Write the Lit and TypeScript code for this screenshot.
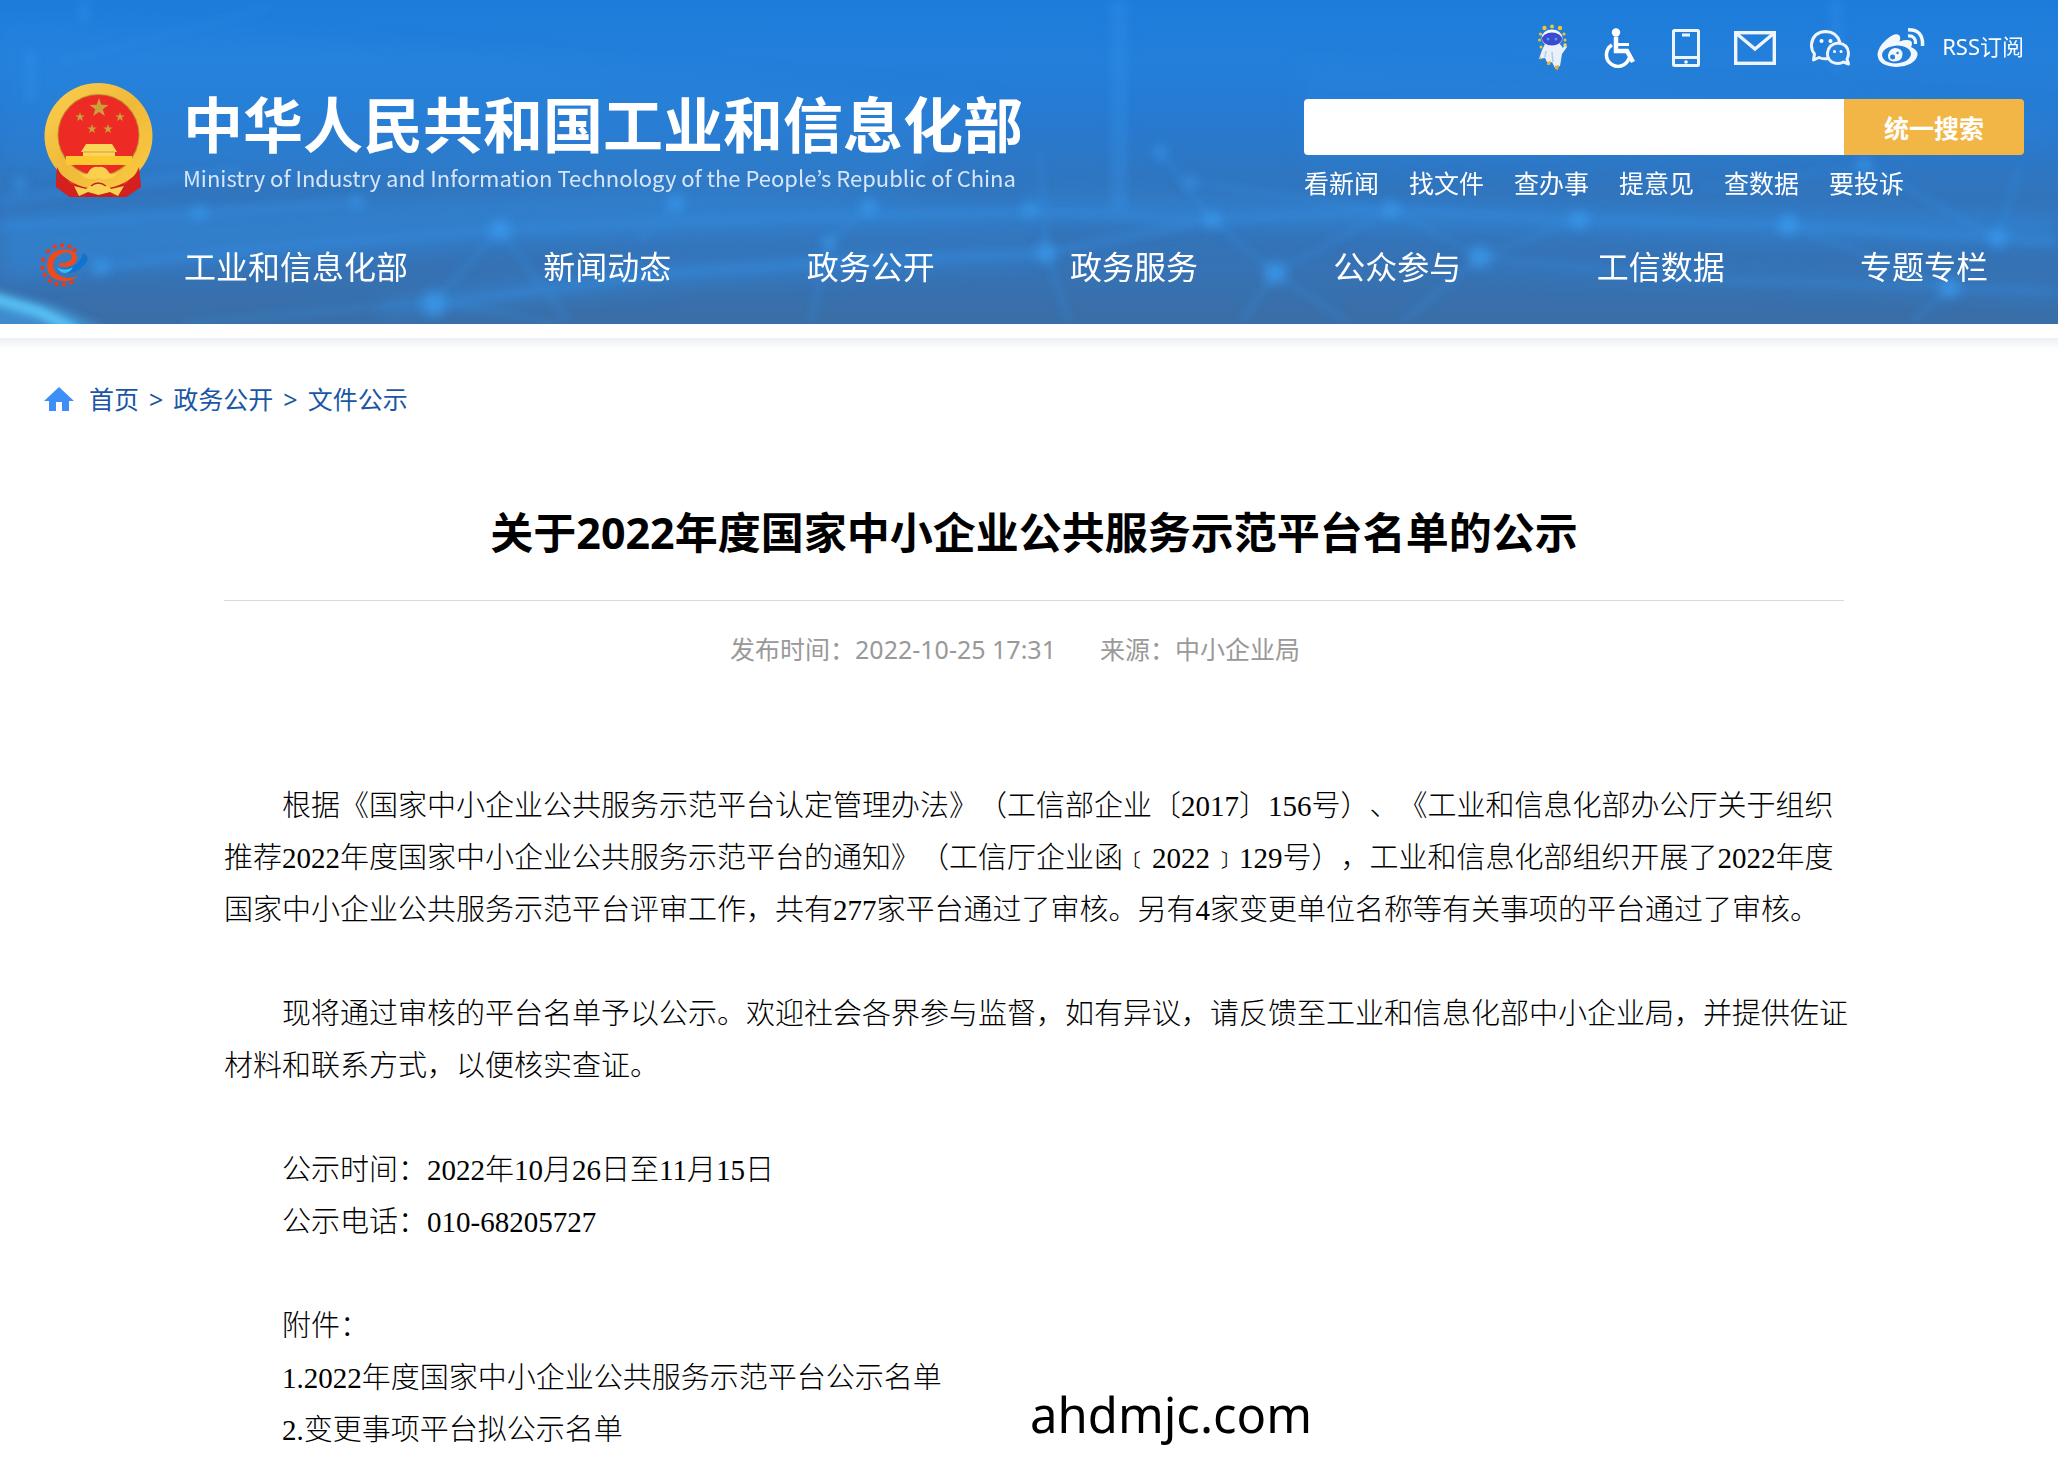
import { LitElement, html, css, svg } from "lit";
import { customElement } from "lit/decorators.js";

const star = (cx: number, cy: number, r: number) => {
  const pts: string[] = [];
  for (let i = 0; i < 10; i++) {
    const a = -Math.PI / 2 + (i * Math.PI) / 5;
    const k = i % 2 ? r * 0.4 : r;
    pts.push(`${(cx + k * Math.cos(a)).toFixed(2)},${(cy + k * Math.sin(a)).toFixed(2)}`);
  }
  return svg`<polygon points=${pts.join(" ")} fill="#c9a03a"/>`;
};

const emblem = html`
  <svg class="emblem" viewBox="0 0 109 116" role="img" aria-label="国徽">
    <defs>
      <linearGradient id="gold" x1="0" y1="0" x2="1" y2="1">
        <stop offset="0" stop-color="#fbd04f" /><stop offset=".5" stop-color="#f0b93a" /><stop offset="1" stop-color="#fccb42" />
      </linearGradient>
    </defs>
    <path d="M13 80 L12 104 L26 114 L82 114 L97 104 L94 80 Z" fill="#c9201c" />
    <path d="M18 88 L16 104 M25 92 L30 110 M90 88 L92 103 M84 92 L79 110" stroke="#e8342b" stroke-width="4" fill="none" />
    <ellipse cx="54.500" cy="53" rx="54" ry="53" fill="url(#gold)" />
    <path d="M13 84 Q22 104 44 106 L40 114 L26 114 L12 104 Z" fill="#d5211d" />
    <path d="M95 84 Q87 104 65 106 L69 114 L82 114 L97 104 Z" fill="#d5211d" />
    <circle cx="54.500" cy="52" r="41" fill="#b98a2c" />
    <circle cx="54.500" cy="52" r="40" fill="#ee2a24" />
    ${star(55, 25, 10)}${star(36, 34, 5)}${star(76, 34, 5)}${star(48, 46, 5)}${star(64, 46, 5)}
    <path d="M42 61 H68 L73 69 H71 V73 H39 V69 H37 Z" fill="#fbd65b" />
    <path d="M39 69 H71" stroke="#d99d2d" stroke-width="1" />
    <path d="M22 73 H88 V82 H22 Z" fill="#fcc832" />
    <path d="M36 90 Q43 94 45 88 Q49 83 54.500 84 Q60 83 64 88 Q67 94 74 90 Q66 99 54.500 95 Q43 99 36 90 Z" fill="#fbd04f" />
    <path d="M30 103 L42 106 L50 100 L54.500 97 L60 100 L67 106 L80 103 L74 113 L66 109 L54.500 112 L44 109 L35 113 Z" fill="#f9d254" />
    <path d="M47 103 Q54 97 62 103" stroke="#c9201c" stroke-width="1.500" fill="none" />
  </svg>`;

const teeth = [-45, -22, 0, 22, 40, 152, 174, 196, 218, 240, 262, 286];
const gearLogo = html`
  <svg class="gear" viewBox="0 0 50 44" aria-hidden="true">
    ${teeth.map(
      (a) => svg`<rect x="-2" y="-21.500" width="4" height="3.500" fill="#ea3a17" transform="translate(22 22) rotate(${a})"/>`
    )}
    <path d="M39 33 Q31 39 22 38 Q7 36 7 22 Q8 8 22 6.500 Q36 6 37 14 Q37 23 26 24 Q20 24 18 22 L20 20 Q31 20 32 14 Q31 8 23 10 Q13 14 13 23 Q15 34 28 35 Q34 35 39 33 Z" fill="#f04a1a" />
    <path d="M17 24 Q26 28 36 21 Q42 16 43 10 Q52 14 44 22 Q36 31 25 30 Q19 29 17 24 Z" fill="#1172cf" />
    <path d="M17 24 Q24 29 33 24 Q30 30 24 30 Q19 29 17 24 Z" fill="#39bdf0" />
  </svg>`;

const robotIcon = svg`
  <svg viewBox="0 0 30 48" width="30" height="48">
    <g fill="#f3c331">
      <circle cx="6.500" cy="4" r="2.200"/><circle cx="14" cy="2.500" r="2"/><circle cx="22" cy="4" r="2.200"/>
      <circle cx="2.500" cy="10" r="1.600"/><circle cx="26" cy="10" r="1.600"/><circle cx="1.500" cy="16" r="1.500"/><circle cx="27" cy="16" r="1.500"/><circle cx="3" cy="23" r="1.500"/>
    </g>
    <ellipse cx="14" cy="14" rx="10.500" ry="8.500" fill="#f3f6fb"/>
    <path d="M7 20 H22 L25 24 L27 20 L29 23 L24 30 L22 42 L17 44 L14 38 L10 40 L7 34 L1 35 L4 26 Z" fill="#eaf0fa"/>
    <path d="M14 28 L15 38 M8 27 L7 33" stroke="#b4c9e6" stroke-width="1.500"/>
    <ellipse cx="14" cy="15" rx="10" ry="6.500" fill="#3d49cf"/>
    <circle cx="10" cy="15" r="1.500" fill="#39a5f5"/><circle cx="18" cy="15" r="1.500" fill="#39a5f5"/>
    <path d="M9 38 L13 37 L12 41 L9 41 Z M17 42 L21 41 L20 46 L17 45 Z M1 33 L4 34 L3 36 Z" fill="#f2a932"/>
    <circle cx="27" cy="21" r="1.800" fill="#f6cf63"/>
  </svg>`;

const wheelchairIcon = svg`
  <svg viewBox="0 0 32 40" width="32" height="40" fill="none" stroke="#fff" stroke-width="3.500">
    <circle cx="12" cy="4.500" r="4.200" fill="#fff" stroke="none"/>
    <path d="M12 9 V23 H23 L29 34" stroke-width="4.500"/>
    <path d="M12 16.500 H25" stroke-width="3"/>
    <path d="M8 17 A11.500 11.500 0 1 0 25 30"/>
  </svg>`;

const phoneIcon = svg`
  <svg viewBox="0 0 28 38" width="28" height="38" fill="none" stroke="#eef5fd" stroke-width="3">
    <rect x="1.500" y="1.500" width="25" height="35" rx="1"/>
    <path d="M2 28.500 H26 M10 6 H18"/>
    <circle cx="14" cy="33" r="1.800" fill="#fff" stroke="none"/>
  </svg>`;

const mailIcon = svg`
  <svg viewBox="0 0 42 34" width="42" height="34" fill="none" stroke="#eef5fd" stroke-width="3.400">
    <rect x="1.700" y="1.700" width="38.600" height="30.600"/>
    <path d="M3 3 L21 18 L39 3"/>
  </svg>`;

const wechatIcon = svg`
  <svg viewBox="0 0 40 36" width="40" height="36" fill="none" stroke="#eef5fd" stroke-width="3" stroke-linejoin="round">
    <path d="M18 28.500 Q13 29.500 9 27.500 L3.500 30 L4.500 24 Q1 20 1.500 14 Q3 2 16 1.500 Q27 2 30 12.500"/>
    <path d="M28 13 Q38 14 38.500 23 Q38.500 26.500 37 29 L38.500 34 L33.500 32 Q28 35 22 32 Q17 29 17.500 23 Q18.500 14 28 13 Z"/>
    <g fill="#fff" stroke="none"><circle cx="11.500" cy="11" r="2"/><circle cx="20.500" cy="11" r="2"/><circle cx="24.500" cy="21.500" r="1.500"/><circle cx="31" cy="21.500" r="1.500"/></g>
  </svg>`;

const weiboIcon = svg`
  <svg viewBox="0 0 48 40" width="48" height="40">
    <path fill-rule="evenodd" fill="#f4f8fe" d="M21 6.500 Q24.500 8 22.500 13.500 Q30 11 34 13 Q36 15 34 19 Q41 22 40.500 27 Q38 38 19 39 Q1 38 .5 26.500 Q1 19 9 12 Q16 5.500 21 6.500 Z M20 17.500 Q5.500 19 5 27 Q6 35 19 35.500 Q33 34 34 26 Q33 18 20 17.500 Z"/>
    <path fill-rule="evenodd" fill="#f4f8fe" d="M18 20 Q25.500 20 25.500 26.500 Q25 33.500 17 33.500 Q10.500 33 11 27 Q12 21 18 20 Z M15.500 26.500 A2.500 2.500 0 1 0 15.600 31.500 A2.500 2.500 0 1 0 15.500 26.500 Z M20.500 23.800 A1.200 1.200 0 1 0 20.600 26.300 A1.200 1.200 0 1 0 20.500 23.800 Z"/>
    <path d="M31 8 Q39 7.500 38.500 16" fill="none" stroke="#f4f8fe" stroke-width="3.200"/>
    <path d="M31 1.800 Q46.500 1.500 45.500 18" fill="none" stroke="#f4f8fe" stroke-width="3.500"/>
  </svg>`;

const tools = [
  { label: "智能问答", icon: robotIcon },
  { label: "无障碍", icon: wheelchairIcon },
  { label: "手机版", icon: phoneIcon },
  { label: "邮箱", icon: mailIcon },
  { label: "微信", icon: wechatIcon },
  { label: "微博", icon: weiboIcon },
];

const nodes: [number, number, number][] = [
  [199, 213, 7], [358, 202, 6], [500, 230, 10], [676, 203, 8], [869, 207, 8], [100, 267, 8],
  [434, 304, 12], [829, 243, 7], [1030, 210, 7], [1046, 253, 10], [1212, 220, 8], [1391, 210, 8],
  [1579, 220, 9], [1788, 225, 10], [1998, 238, 9], [1275, 273, 11], [1480, 257, 11], [1950, 288, 10],
  [1190, 182, 6], [1864, 165, 7], [1160, 152, 6], [20, 184, 6],
];

const backdrop = html`
  <svg class="backdrop" viewBox="0 0 2058 324" preserveAspectRatio="none" aria-hidden="true">
    <defs>
      <filter id="soft" x="-5%" y="-20%" width="110%" height="140%"><feGaussianBlur stdDeviation="4" /></filter>
      <filter id="glow" x="-5%" y="-20%" width="110%" height="140%"><feGaussianBlur stdDeviation="6" /></filter>
      <filter id="softer" x="-20%" y="-50%" width="140%" height="200%"><feGaussianBlur stdDeviation="10" /></filter>
    </defs>
    <g filter="url(#softer)" fill="#3394ee" opacity=".34">
      <path d="M0 20 L240 30 L1000 100 L900 190 L0 170 Z" opacity=".5" />
      <path d="M1300 60 L2058 110 L2058 150 L1300 170 Z" opacity=".4" />
      <path d="M1020 195 L2058 215 L2058 245 L1020 222 Z" />
      <path d="M0 215 L676 190 L1040 205 L1040 228 L500 245 L0 280 Z" />
      <path d="M380 300 L673 262 L1040 246 L1040 262 L673 285 L380 318 Z" />
      <path d="M1480 262 L2058 285 L2058 300 L1480 272 Z" opacity=".7" />
    </g>
    <g filter="url(#soft)" stroke="#3795ec" fill="none" stroke-width="9" opacity=".3">
      <path d="M0 226 L199 213 L358 202 M240 250 L500 230 L676 222 L869 215 L1030 212 L1212 220 L1391 210 L1579 220 L1788 225 L1998 238 L2058 242" />
      <path d="M0 200 L240 170 M100 267 L240 250 M434 304 L673 273 L829 262 L1046 253 L1212 220" />
      <path d="M434 302 L180 324 M434 302 L560 324 M500 230 L434 302 M500 230 L570 324" stroke-width="5" />
      <path d="M1212 220 L1275 273 L1391 210 L1480 257 L1579 220 M1275 273 L1240 324 M1275 273 L1350 324 M1480 257 L1400 324" stroke-width="5" />
      <path d="M1480 257 L1700 280 L1950 288 L2058 292 M1950 288 L1910 324 M1950 288 L1788 225 M1998 238 L2020 165 M1864 165 L1998 238" stroke-width="5" />
      <path d="M1040 150 L1046 253 L1070 324 M1160 152 L1212 220 M1190 182 L1391 210 M676 203 L640 240 M869 207 L829 243 L810 324" stroke-width="5" />
      <path d="M1119 0 V210" stroke-width="18" />
      <path d="M31 50 V100 M84 0 V24 M1836 0 V70" stroke-width="12" />
      <path d="M60 62 L270 8 M1700 190 L1864 165" stroke-width="4" />
    </g>
    <g filter="url(#glow)" fill="#3a9df2" opacity=".75">
      ${nodes.map(([x, y, r]) => svg`<circle cx=${x} cy=${y} r=${r}/>`)}
    </g>
    <g filter="url(#soft)">
      <path d="M-10 290 L60 308 L110 330 L-10 330 Z" fill="#3f9fe6" opacity=".6" />
      <path d="M-10 297 L40 312 L75 330" stroke="#5cc8fa" stroke-width="10" fill="none" />
    </g>
  </svg>`;

@customElement("site-header")
class SiteHeader extends LitElement {
  static styles = css`
    :host { display: block; }
    .header {
      position: relative;
      overflow: hidden;
      display: flex;
      flex-direction: column;
      color: #fff;
      background: linear-gradient(#1d7cdb 0, #237fda 60px, #2879ce 130px, #3175bd 190px, #3672b4 270px, #3a6ea6 100%);
      padding: 24px 34px 35px 44px;
      font-family: "Noto Sans", "Noto Sans CJK SC", sans-serif;
    }
    .backdrop { position: absolute; inset: 0; width: 100%; height: 100%; }
    .top { position: relative; display: flex; justify-content: space-between; height: 175px; }
    .brand { display: flex; align-items: flex-start; gap: 30px; color: inherit; text-decoration: none; padding-top: 59px; }
    .emblem { width: 109px; height: 116px; flex: none; }
    .gear { width: 50px; height: 44px; flex: none; }
    .names { display: flex; flex-direction: column; white-space: nowrap; }
    .name { font-family: "Noto Sans CJK SC", sans-serif; font-size: 60px; line-height: 78px; font-weight: 700; }
    .english { font-family: "Noto Sans CJK KR", sans-serif; font-size: 22px; line-height: 32px; color: #d6e6f8; }
    .side { display: flex; flex-direction: column; width: 720px; flex: none; }
    .tools { display: flex; align-items: center; justify-content: flex-end; height: 48px; flex: none; }
    .tool { display: flex; color: inherit; text-decoration: none; margin-right: 36px; }
    .tool:nth-child(3), .tool:nth-child(4) { margin-right: 34px; }
    .tool:nth-child(5) { margin-right: 27px; }
    .tool:nth-child(6) { margin-right: 17px; }
    .rss { font-size: 22px; line-height: 44px; align-self: flex-start; color: inherit; text-decoration: none; }
    .search { display: flex; flex: none; height: 56px; margin: 27px 0 0; border-radius: 4px; overflow: hidden; }
    .field { flex: 1; min-width: 0; border: 0; padding: 0 16px; background: #fff; font: inherit; font-size: 25px; outline: none; }
    .submit { width: 180px; border: 0; background: #f2b646; color: #fff; font: inherit; font-size: 25px; font-weight: 700; padding: 0; }
    .quick { display: flex; flex: none; gap: 30px; font-size: 25px; line-height: 36px; margin-top: 10px; }
    .quick a, .links a { color: inherit; text-decoration: none; white-space: nowrap; }
    .nav { position: relative; display: flex; align-items: center; height: 48px; margin-top: 42px; margin-left: -4px; font-size: 32px; }
    .links { display: flex; flex: 1; justify-content: space-between; margin: 0 36px 0 94px; }
    .edge { height: 14px; background: #fff; }
    .shade { height: 12px; background: linear-gradient(#ebf0f5, #fff); }
  `;
  render() {
    return html`
      <header class="header">
        ${backdrop}
        <div class="top">
          <a class="brand" href="#">
            ${emblem}
            <span class="names">
              <span class="name">中华人民共和国工业和信息化部</span>
              <span class="english" lang="en">Ministry of Industry and Information Technology of the People’s Republic of China</span>
            </span>
          </a>
          <div class="side">
            <div class="tools">
              ${tools.map((t) => html`<a class="tool" href="#" aria-label=${t.label}>${t.icon}</a>`)}
              <a class="rss" href="#">RSS订阅</a>
            </div>
            <form class="search" @submit=${(e: Event) => e.preventDefault()}>
              <input class="field" type="text" aria-label="统一搜索" />
              <button class="submit" type="submit">统一搜索</button>
            </form>
            <div class="quick">
              ${["看新闻", "找文件", "查办事", "提意见", "查数据", "要投诉"].map((t) => html`<a href="#">${t}</a>`)}
            </div>
          </div>
        </div>
        <nav class="nav">
          ${gearLogo}
          <div class="links">
            ${["工业和信息化部", "新闻动态", "政务公开", "政务服务", "公众参与", "工信数据", "专题专栏"].map(
              (t) => html`<a href="#">${t}</a>`
            )}
          </div>
        </nav>
      </header>
      <div class="edge"></div>
      <div class="shade"></div>
    `;
  }
}

@customElement("notice-article")
class NoticeArticle extends LitElement {
  static styles = css`
    :host { display: block; }
    .article { padding: 0 180px; font-family: "Noto Sans", "Noto Sans CJK SC", sans-serif; }
    .title { margin: 0; padding-bottom: 35px; border-bottom: 1px solid #d9d9d9; font-size: 43px; line-height: 64px; font-weight: 700; text-align: center; color: #000; }
    .meta { display: flex; justify-content: center; gap: 44px; margin-top: 30px; padding-right: 38px; font-size: 25px; line-height: 36px; color: #999; }
    .body { margin: 113px -16px 0 0; font-family: "Liberation Serif", "Noto Sans CJK SC", serif; font-weight: 300; font-size: 29px; line-height: 52px; color: #000; text-spacing-trim: space-all; }
    .body p { margin: 0; text-indent: 2em; }
    .body .gap { margin-top: 52px; }
    .body a { color: inherit; text-decoration: none; }
  `;
  render() {
    return html`
      <article class="article">
        <h1 class="title">关于2022年度国家中小企业公共服务示范平台名单的公示</h1>
        <div class="meta"><span>发布时间：2022-10-25 17:31</span><span>来源：中小企业局</span></div>
        <div class="body">
          <p>根据《国家中小企业公共服务示范平台认定管理办法》（工信部企业〔2017〕156号）、《工业和信息化部办公厅关于组织推荐2022年度国家中小企业公共服务示范平台的通知》（工信厅企业函﹝2022﹞129号），工业和信息化部组织开展了2022年度国家中小企业公共服务示范平台评审工作，共有277家平台通过了审核。另有4家变更单位名称等有关事项的平台通过了审核。</p>
          <p class="gap">现将通过审核的平台名单予以公示。欢迎社会各界参与监督，如有异议，请反馈至工业和信息化部中小企业局，并提供佐证材料和联系方式，以便核实查证。</p>
          <p class="gap">公示时间：2022年10月26日至11月15日</p>
          <p>公示电话：010-68205727</p>
          <p class="gap">附件：</p>
          <p><a href="#">1.2022年度国家中小企业公共服务示范平台公示名单</a></p>
          <p><a href="#">2.变更事项平台拟公示名单</a></p>
        </div>
      </article>
    `;
  }
}

@customElement("app-root")
class AppRoot extends LitElement {
  static styles = css`
    :host { display: block; position: relative; background: #fff; }
    .main { padding: 0 34px 6px 44px; }
    .crumbs { display: flex; align-items: center; gap: 10px; padding: 31px 0 84px; font-family: "Noto Sans", "Noto Sans CJK SC", sans-serif; font-size: 25px; line-height: 36px; color: #1a56a5; }
    .crumbs a { color: inherit; text-decoration: none; }
    .home { width: 30px; height: 24px; margin-right: 5px; }
    .mark { position: absolute; left: 1030px; bottom: 16px; font-family: "Noto Sans", sans-serif; font-size: 49px; line-height: 64px; color: #000; }
  `;
  render() {
    return html`
      <site-header></site-header>
      <main class="main">
        <nav class="crumbs">
          <svg class="home" viewBox="0 0 30 24" aria-hidden="true"><path d="M15 0 L30 14 H25 V24 H18 V15 H12 V24 H5 V14 H0 Z" fill="#3d8ff8" /></svg>
          <a href="#">首页</a><span>&gt;</span><a href="#">政务公开</a><span>&gt;</span><a href="#">文件公示</a>
        </nav>
        <notice-article></notice-article>
      </main>
      <div class="mark">ahdmjc.com</div>
    `;
  }
}
